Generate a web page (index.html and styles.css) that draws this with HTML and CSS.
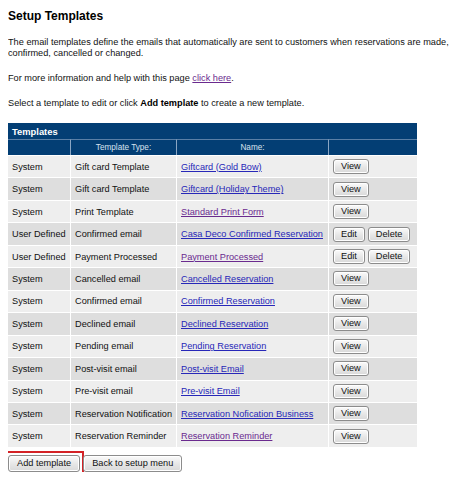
FILE: index.html
```html
<!DOCTYPE html>
<html>
<head>
<meta charset="utf-8">
<title>Setup Templates</title>
<link rel="stylesheet" href="styles.css">
</head>
<body>
<h1 class="title">Setup Templates</h1>
<p class="text">The email templates define the emails that automatically are sent to customers when reservations are made, confirmed, cancelled or changed.</p>
<p class="text">For more information and help with this page <a class="link visited" href="#">click here</a>.</p>
<p class="text">Select a template to edit or click <b>Add template</b> to create a new template.</p>
<table class="grid">
  <colgroup>
    <col class="c1"><col class="c2"><col class="c3"><col class="c4">
  </colgroup>
  <thead>
    <tr class="caption-row"><th colspan="4" class="caption">Templates</th></tr>
    <tr class="head-row"><th></th><th>Template Type:</th><th>Name:</th><th></th></tr>
  </thead>
  <tbody>
    <tr><td>System</td><td>Gift card Template</td><td><a class="link" href="#">Giftcard (Gold Bow)</a></td><td><button class="btn">View</button></td></tr>
    <tr><td>System</td><td>Gift card Template</td><td><a class="link" href="#">Giftcard (Holiday Theme)</a></td><td><button class="btn">View</button></td></tr>
    <tr><td>System</td><td>Print Template</td><td><a class="link visited" href="#">Standard Print Form</a></td><td><button class="btn">View</button></td></tr>
    <tr><td>User Defined</td><td>Confirmed email</td><td><a class="link" href="#">Casa Deco Confirmed Reservation</a></td><td><div class="actions"><button class="btn">Edit</button><button class="btn">Delete</button></div></td></tr>
    <tr><td>User Defined</td><td>Payment Processed</td><td><a class="link visited" href="#">Payment Processed</a></td><td><div class="actions"><button class="btn">Edit</button><button class="btn">Delete</button></div></td></tr>
    <tr><td>System</td><td>Cancelled email</td><td><a class="link" href="#">Cancelled Reservation</a></td><td><button class="btn">View</button></td></tr>
    <tr><td>System</td><td>Confirmed email</td><td><a class="link" href="#">Confirmed Reservation</a></td><td><button class="btn">View</button></td></tr>
    <tr><td>System</td><td>Declined email</td><td><a class="link" href="#">Declined Reservation</a></td><td><button class="btn">View</button></td></tr>
    <tr><td>System</td><td>Pending email</td><td><a class="link" href="#">Pending Reservation</a></td><td><button class="btn">View</button></td></tr>
    <tr><td>System</td><td>Post-visit email</td><td><a class="link" href="#">Post-visit Email</a></td><td><button class="btn">View</button></td></tr>
    <tr><td>System</td><td>Pre-visit email</td><td><a class="link" href="#">Pre-visit Email</a></td><td><button class="btn">View</button></td></tr>
    <tr><td>System</td><td>Reservation Notification</td><td><a class="link" href="#">Reservation Nofication Business</a></td><td><button class="btn">View</button></td></tr>
    <tr><td>System</td><td>Reservation Reminder</td><td><a class="link visited" href="#">Reservation Reminder</a></td><td><button class="btn">View</button></td></tr>
  </tbody>
</table>
<div class="footer">
  <span class="marker"><button class="btn big">Add template</button></span>
  <button class="btn big">Back to setup menu</button>
</div>
</body>
</html>
```
FILE: styles.css
```css
html, body {
  background: #ffffff;
}
body {
  margin: 9px 4px 8px 8px;
  font-family: "Liberation Sans", Arial, sans-serif;
  font-size: 9.2px;
  color: #111111;
}
.title {
  margin: 0;
  font-size: 12px;
  line-height: 14px;
  font-weight: bold;
  color: #000000;
}
.text {
  margin: 14px 0 0 0;
  line-height: 11px;
}
.text b {
  color: #000;
}
.link {
  color: #2727b8;
  text-decoration: underline;
}
.link.visited {
  color: #6a2a8e;
}
.grid {
  margin-top: 14px;
  width: 409px;
  border-collapse: separate;
  border-spacing: 0;
  table-layout: fixed;
}
.c1 { width: 62px; }
.c2 { width: 106px; }
.c3 { width: 152px; }
.c4 { width: 89px; }
.caption-row th {
  height: 16px;
  box-sizing: border-box;
  background: #033e74;
  color: #ffffff;
  font-weight: bold;
  text-align: left;
  padding: 0 4px;
  font-size: 9.4px;
}
.head-row th {
  height: 16px;
  box-sizing: border-box;
  background: #033e74;
  color: #d8e2ee;
  font-weight: normal;
  font-size: 8.2px;
  text-align: center;
  padding: 0;
  border-top: 1px solid #5a7fa6;
  border-left: 1px solid #8aa6c4;
}
.head-row th:first-child {
  border-left: none;
}
tbody td {
  height: 22.46px;
  box-sizing: border-box;
  padding: 0 4px;
  border-top: 1px solid #ffffff;
  border-left: 1px solid #ffffff;
  background: #eeeeee;
  white-space: nowrap;
  vertical-align: middle;
}
tbody td:first-child {
  border-left: none;
}
tbody tr:nth-child(even) td {
  background: #dedede;
}
.actions {
  display: flex;
  gap: 3px;
}
.btn {
  font-family: "Liberation Sans", Arial, sans-serif;
  font-size: 9.2px;
  color: #111;
  height: 15px;
  padding: 0 7px;
  margin: 0;
  border: 1px solid #8c8c8c;
  border-radius: 3px;
  background: linear-gradient(#fbfbfb, #e6e6e6 55%, #d9d9d9);
  box-shadow: inset 0 0 0 1px #ffffff;
  line-height: 13px;
}
.footer {
  margin-top: 8px;
  display: flex;
  align-items: flex-start;
  gap: 3px;
}
.btn.big {
  height: 17px;
  padding: 0 8px;
  display: block;
}
.marker {
  display: block;
  margin: -4px -4px -4px -4px;
  padding: 2px;
  border: 2px solid #d42226;
}
```
